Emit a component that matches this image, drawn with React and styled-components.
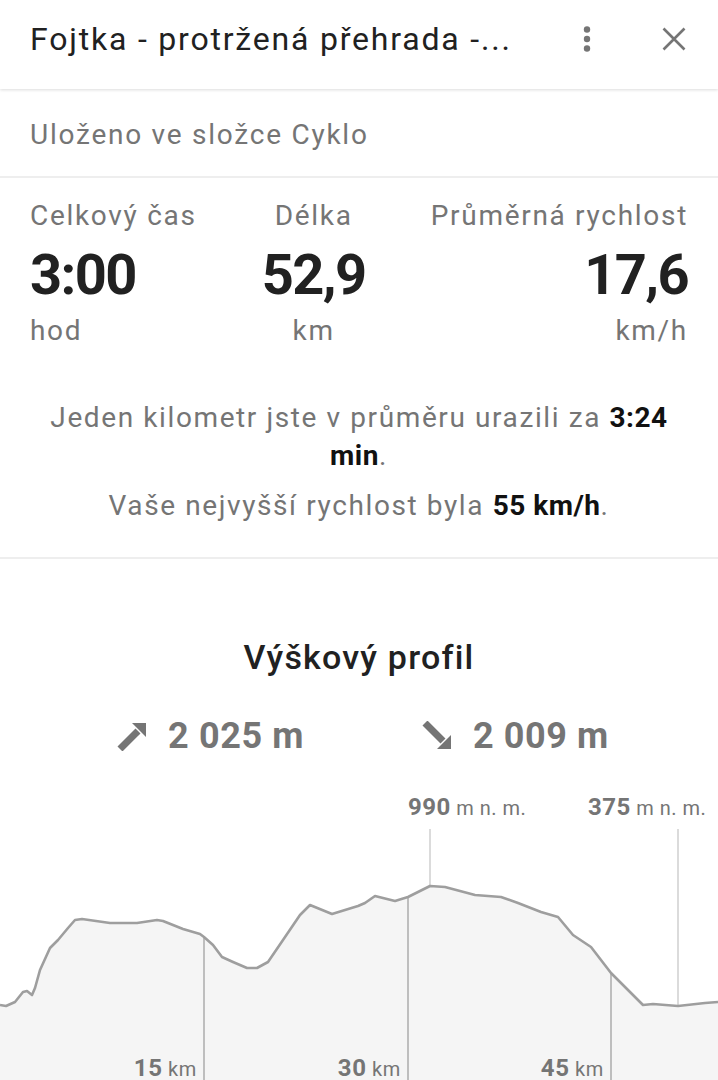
import React from "react";
import styled, { createGlobalStyle } from "styled-components";

const GlobalStyle = createGlobalStyle`
  html, body { margin: 0; padding: 0; background: #ffffff; }
  body { font-family: Roboto, "Noto Sans", sans-serif; -webkit-font-smoothing: antialiased; }
  * { box-sizing: border-box; }
`;

const Page = styled.div`
  width: 718px;
  height: 1080px;
  overflow: hidden;
  background: #fff;
  display: flex;
  flex-direction: column;
`;

const Header = styled.header`
  position: relative;
  z-index: 2;
  height: 89px;
  flex-shrink: 0;
  display: flex;
  align-items: center;
  padding: 0 32px 12px 30px;
  background: #fff;
  box-shadow: 0 1px 3px rgba(0, 0, 0, 0.14);
`;

const Title = styled.h1`
  flex: 1;
  margin: 0;
  font-size: 32px;
  line-height: 40px;
  font-weight: 400;
  letter-spacing: 1.8px;
  color: #212121;
  white-space: nowrap;
  overflow: hidden;
`;

const IconButton = styled.div`
  width: 24px;
  height: 24px;
  display: flex;
  align-items: center;
  justify-content: center;
  margin-left: ${(p) => p.$gap || 0}px;
  svg { display: block; overflow: visible; }
`;

const SavedRow = styled.div`
  height: 89px;
  flex-shrink: 0;
  display: flex;
  align-items: center;
  padding: 5px 30px 0;
  border-bottom: 2px solid #eeeeee;
  font-size: 28px;
  line-height: 30px;
  letter-spacing: 1.75px;
  color: #757575;
`;

const StatsSection = styled.section`
  flex-shrink: 0;
  padding: 23px 30px 32px;
  border-bottom: 2px solid #eeeeee;
`;

const StatsRow = styled.div`
  display: flex;
  justify-content: space-between;
`;

const StatCol = styled.div`
  display: flex;
  flex-direction: column;
  align-items: ${(p) => p.$align};
  text-align: ${(p) => (p.$align === "flex-end" ? "right" : p.$align === "center" ? "center" : "left")};
`;

const StatLabel = styled.div`
  font-size: 28px;
  line-height: 30px;
  letter-spacing: 1.7px;
  color: #757575;
`;

const StatValue = styled.div`
  margin-top: 14px;
  font-size: 56px;
  line-height: 60px;
  font-weight: 700;
  color: #212121;
  letter-spacing: -1.6px;
`;

const StatUnit = styled.div`
  margin-top: 11px;
  font-size: 28px;
  line-height: 30px;
  letter-spacing: 1.7px;
  color: #757575;
`;

const Summary = styled.div`
  margin-top: 53px;
  display: flex;
  flex-direction: column;
  gap: 12px;
`;

const SummaryLine = styled.p`
  margin: 0;
  text-align: center;
  font-size: 28px;
  line-height: 38px;
  letter-spacing: 1.6px;
  color: #757575;
  b { color: #111; font-weight: 700; letter-spacing: 0.5px; }
`;

const ProfileSection = styled.section`
  flex: 1;
  display: flex;
  flex-direction: column;
  align-items: center;
  padding-top: 78px;
`;

const ProfileTitle = styled.h2`
  margin: 0;
  font-size: 34px;
  line-height: 40px;
  font-weight: 500;
  letter-spacing: 1.2px;
  color: #212121;
`;

const ClimbRow = styled.div`
  margin-top: 37px;
  display: flex;
  justify-content: center;
  gap: 118px;
  height: 44px;
  align-items: center;
  width: 100%;
  padding-left: 8px;
`;

const Climb = styled.div`
  display: flex;
  align-items: center;
  gap: 21px;
  font-size: 36px;
  line-height: 44px;
  font-weight: 700;
  letter-spacing: 0.6px;
  color: #757575;
  svg { display: block; }
`;

const ChartWrap = styled.div`
  margin-top: 22px;
  width: 718px;
  height: 300px;
  svg { display: block; }
`;

const points = [
  [0, 1005], [6, 1006], [15, 1002], [23, 992], [27, 991], [32, 995], [35, 988], [40, 970],
  [50, 948], [58, 940], [68, 928], [75, 920], [82, 919], [110, 923], [137, 923], [157, 920],
  [163, 921], [183, 929], [200, 934], [204, 937], [213, 945], [222, 957], [233, 962], [247, 968],
  [257, 968], [268, 962], [283, 940], [300, 915], [310, 905], [332, 914], [358, 906], [365, 903],
  [375, 896], [395, 901], [408, 897], [430, 886], [445, 887], [475, 895], [501, 897], [518, 903],
  [541, 912], [558, 917], [573, 935], [591, 947], [611, 973], [625, 987], [643, 1005], [653, 1004],
  [678, 1006], [705, 1003], [718, 1002],
];

const linePath = points.map((p, i) => `${i ? "L" : "M"}${p[0]} ${p[1]}`).join(" ");
const areaPath = `${linePath} L718 1080 L0 1080 Z`;

const kmMarks = [
  { x: 204, top: 937, label: "15" },
  { x: 408, top: 897, label: "30" },
  { x: 611, top: 973, label: "45" },
];

const altMarks = [
  { x: 430, bottom: 886, labelX: 408, label: "990" },
  { x: 678, bottom: 1006, labelX: 588, label: "375" },
];

function KebabIcon() {
  return (
    <svg width="24" height="24" viewBox="0 0 24 24">
      <circle cx="12" cy="2.5" r="3.2" fill="#757575" />
      <circle cx="12" cy="12" r="3.2" fill="#757575" />
      <circle cx="12" cy="21.5" r="3.2" fill="#757575" />
    </svg>
  );
}

function CloseIcon() {
  return (
    <svg width="24" height="24" viewBox="0 0 24 24">
      <path d="M1.5 1.5 L22.5 22.5 M22.5 1.5 L1.5 22.5" stroke="#757575" strokeWidth="2.6" fill="none" />
    </svg>
  );
}

function ArrowUp() {
  return (
    <svg width="30" height="30" viewBox="0 0 30 30">
      <path d="M3 28 L21 10" stroke="#757575" strokeWidth="7" fill="none" />
      <path d="M15 2 L29 2 L29 16 Z" fill="#757575" />
    </svg>
  );
}

function ArrowDown() {
  return (
    <svg width="30" height="30" viewBox="0 0 30 30">
      <path d="M3 2 L21 20" stroke="#757575" strokeWidth="7" fill="none" />
      <path d="M15 28 L29 28 L29 14 Z" fill="#757575" />
    </svg>
  );
}

function ElevationChart() {
  return (
    <svg width="718" height="300" viewBox="0 780 718 300" fontFamily="Roboto, sans-serif">
      <path d={areaPath} fill="#f5f5f5" />
      {altMarks.map((m) => (
        <g key={m.x}>
          <line x1={m.x} y1={829} x2={m.x} y2={m.bottom} stroke="#cfcfcf" strokeWidth="1.5" />
          <text x={m.labelX} y={815} fill="#757575" letterSpacing="0.5">
            <tspan fontSize="24" fontWeight="700">{m.label}</tspan>
            <tspan fontSize="20"> m n. m.</tspan>
          </text>
        </g>
      ))}
      {kmMarks.map((m) => (
        <g key={m.x}>
          <line x1={m.x} y1={m.top} x2={m.x} y2={1080} stroke="#ababab" strokeWidth="1.5" />
          <text x={m.x - 7} y={1076} textAnchor="end" fill="#757575" letterSpacing="0.6">
            <tspan fontSize="24" fontWeight="700">{m.label}</tspan>
            <tspan fontSize="20"> km</tspan>
          </text>
        </g>
      ))}
      <path d={linePath} fill="none" stroke="#9e9e9e" strokeWidth="2.6" strokeLinejoin="round" />
    </svg>
  );
}

export default function App() {
  return (
    <>
      <GlobalStyle />
      <Page>
        <Header>
          <Title>Fojtka - protržená přehrada -...</Title>
          <IconButton><KebabIcon /></IconButton>
          <IconButton $gap={63}><CloseIcon /></IconButton>
        </Header>
        <SavedRow>Uloženo ve složce Cyklo</SavedRow>
        <StatsSection>
          <StatsRow>
            <StatCol $align="flex-start">
              <StatLabel>Celkový čas</StatLabel>
              <StatValue>3:00</StatValue>
              <StatUnit>hod</StatUnit>
            </StatCol>
            <StatCol $align="center">
              <StatLabel>Délka</StatLabel>
              <StatValue>52,9</StatValue>
              <StatUnit>km</StatUnit>
            </StatCol>
            <StatCol $align="flex-end">
              <StatLabel>Průměrná rychlost</StatLabel>
              <StatValue>17,6</StatValue>
              <StatUnit>km/h</StatUnit>
            </StatCol>
          </StatsRow>
          <Summary>
            <SummaryLine>
              Jeden kilometr jste v průměru urazili za <b>3:24 min</b>.
            </SummaryLine>
            <SummaryLine>
              Vaše nejvyšší rychlost byla <b>55 km/h</b>.
            </SummaryLine>
          </Summary>
        </StatsSection>
        <ProfileSection>
          <ProfileTitle>Výškový profil</ProfileTitle>
          <ClimbRow>
            <Climb><ArrowUp />2 025 m</Climb>
            <Climb><ArrowDown />2 009 m</Climb>
          </ClimbRow>
          <ChartWrap><ElevationChart /></ChartWrap>
        </ProfileSection>
      </Page>
    </>
  );
}
